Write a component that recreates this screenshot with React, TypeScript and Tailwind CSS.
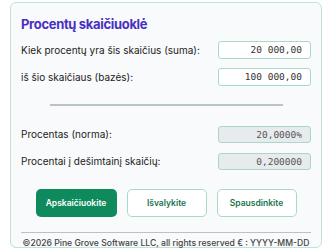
import React from 'react';

const inputRows = [
  { label: 'Kiek procentų yra šis skaičius (suma):', value: '20 000,00' },
  { label: 'iš šio skaičiaus (bazės):', value: '100 000,00' },
];

const outputRows = [
  { label: 'Procentas (norma):', value: '20,0000%' },
  { label: 'Procentai į dešimtainį skaičių:', value: '0,200000' },
];

const App: React.FC = () => {
  return (
    <div className="w-[334px] h-[251px] overflow-hidden bg-white pt-[2px] pl-[10px] font-['Inter',sans-serif]">
      <div className="w-[312px] h-[246px] rounded-md border border-[#bfe3d5] bg-[#f8fafb] px-[10px]">
        {/* Title */}
        <h1 className="mt-[12px] text-[13px] leading-[18px] font-bold tracking-tight text-[#4a2fc4]">Procentų skaičiuoklė</h1>

        {/* Inputs */}
        <div className="mt-[8px] flex flex-col gap-[9px]">
          {inputRows.map((row) => (
            <div key={row.label} className="flex items-center justify-between">
              <span className="text-[10px] text-[#222]">{row.label}</span>
              <div className="w-[93px] h-[18px] rounded-[3px] border border-[#a9d8c6] bg-white px-[8px] text-right font-['DejaVu_Sans_Mono',monospace] text-[9.5px] leading-[16px] text-[#333]">
                {row.value}
              </div>
            </div>
          ))}
        </div>

        {/* Divider */}
        <div className="mx-auto mt-[18px] h-[2px] w-[233px] bg-[#b8c4c2]" />

        {/* Outputs */}
        <div className="mt-[20px] flex flex-col gap-[10px]">
          {outputRows.map((row) => (
            <div key={row.label} className="flex items-center justify-between">
              <span className="text-[10px] text-[#222]">{row.label}</span>
              <div className="w-[93px] h-[17px] rounded-[3px] border border-[#a9d8c6] bg-[#e8ebed] px-[8px] text-right font-['DejaVu_Sans_Mono',monospace] text-[9.5px] leading-[15px] text-[#555]">
                {row.value}
              </div>
            </div>
          ))}
        </div>

        {/* Buttons */}
        <div className="mt-[19px] flex justify-center gap-[10px]">
          <button className="w-[81px] h-[28px] rounded-[5px] bg-[#0e8a5c] text-[8.5px] font-semibold text-white">Apskaičiuokite</button>
          <button className="w-[80px] h-[28px] rounded-[5px] border border-[#a9d8c6] bg-white text-[8.5px] font-semibold text-[#17744f]">Išvalykite</button>
          <button className="w-[80px] h-[28px] rounded-[5px] border border-[#a9d8c6] bg-white text-[8.5px] font-semibold text-[#17744f]">Spausdinkite</button>
        </div>

        {/* Footer */}
        <div className="mt-[15px] border-t border-[#b8c4c2] pt-[3px] text-center text-[8.6px] leading-[14px] font-medium text-[#444]">
          ©2026 Pine Grove Software LLC, all rights reserved € : YYYY-MM-DD
        </div>
      </div>
    </div>
  );
};

export default App;
